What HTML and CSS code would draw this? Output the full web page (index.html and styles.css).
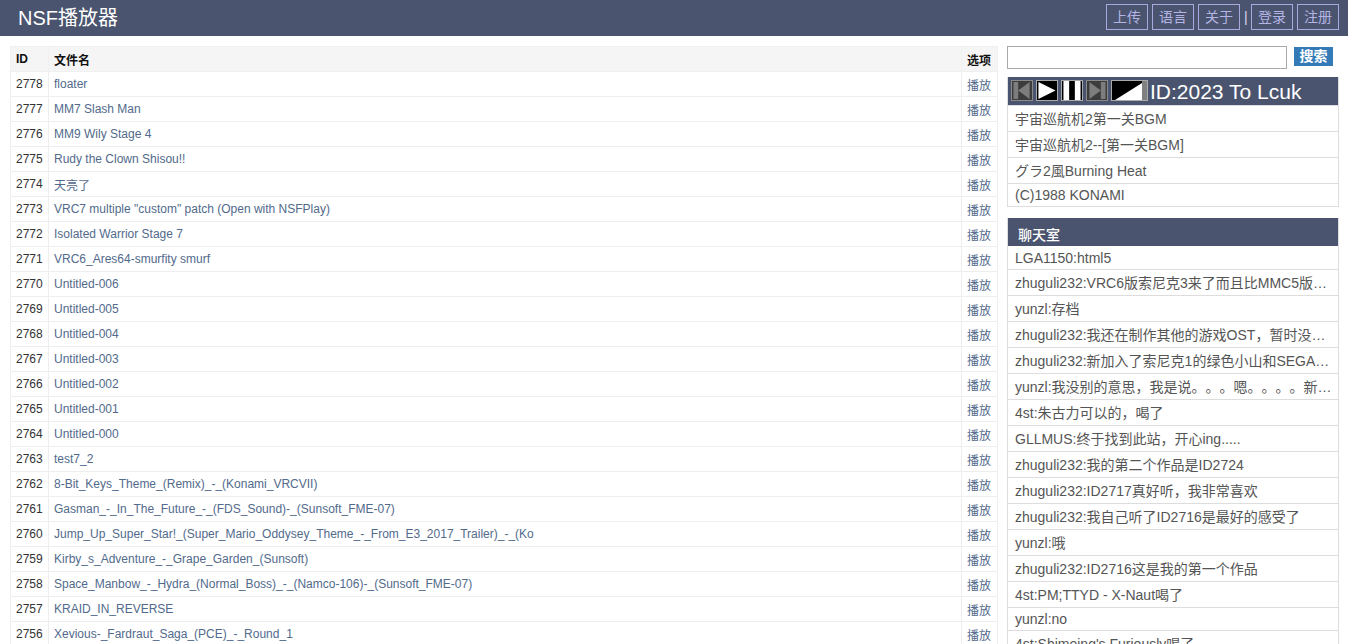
FILE: index.html
```html
<!DOCTYPE html>
<html lang="zh">
<head>
<meta charset="utf-8">
<title>NSF播放器</title>
<link rel="stylesheet" href="styles.css">
</head>
<body>
<header class="topbar">
  <h1 class="brand">NSF播放器</h1>
  <nav class="topnav">
    <a class="navbtn">上传</a>
    <a class="navbtn">语言</a>
    <a class="navbtn">关于</a>
    <span class="navsep">|</span>
    <a class="navbtn">登录</a>
    <a class="navbtn">注册</a>
  </nav>
</header>
<main class="layout">
  <section class="listcol">
    <table class="songs">
      <thead>
        <tr><th class="c-id">ID</th><th class="c-name">文件名</th><th class="c-opt">选项</th></tr>
      </thead>
      <tbody>
        <tr><td>2778</td><td><a>floater</a></td><td><a>播放</a></td></tr>
        <tr><td>2777</td><td><a>MM7 Slash Man</a></td><td><a>播放</a></td></tr>
        <tr><td>2776</td><td><a>MM9 Wily Stage 4</a></td><td><a>播放</a></td></tr>
        <tr><td>2775</td><td><a>Rudy the Clown Shisou!!</a></td><td><a>播放</a></td></tr>
        <tr><td>2774</td><td><a>天亮了</a></td><td><a>播放</a></td></tr>
        <tr><td>2773</td><td><a>VRC7 multiple "custom" patch (Open with NSFPlay)</a></td><td><a>播放</a></td></tr>
        <tr><td>2772</td><td><a>Isolated Warrior Stage 7</a></td><td><a>播放</a></td></tr>
        <tr><td>2771</td><td><a>VRC6_Ares64-smurfity smurf</a></td><td><a>播放</a></td></tr>
        <tr><td>2770</td><td><a>Untitled-006</a></td><td><a>播放</a></td></tr>
        <tr><td>2769</td><td><a>Untitled-005</a></td><td><a>播放</a></td></tr>
        <tr><td>2768</td><td><a>Untitled-004</a></td><td><a>播放</a></td></tr>
        <tr><td>2767</td><td><a>Untitled-003</a></td><td><a>播放</a></td></tr>
        <tr><td>2766</td><td><a>Untitled-002</a></td><td><a>播放</a></td></tr>
        <tr><td>2765</td><td><a>Untitled-001</a></td><td><a>播放</a></td></tr>
        <tr><td>2764</td><td><a>Untitled-000</a></td><td><a>播放</a></td></tr>
        <tr><td>2763</td><td><a>test7_2</a></td><td><a>播放</a></td></tr>
        <tr><td>2762</td><td><a>8-Bit_Keys_Theme_(Remix)_-_(Konami_VRCVII)</a></td><td><a>播放</a></td></tr>
        <tr><td>2761</td><td><a>Gasman_-_In_The_Future_-_(FDS_Sound)-_(Sunsoft_FME-07)</a></td><td><a>播放</a></td></tr>
        <tr><td>2760</td><td><a>Jump_Up_Super_Star!_(Super_Mario_Oddysey_Theme_-_From_E3_2017_Trailer)_-_(Ko</a></td><td><a>播放</a></td></tr>
        <tr><td>2759</td><td><a>Kirby_s_Adventure_-_Grape_Garden_(Sunsoft)</a></td><td><a>播放</a></td></tr>
        <tr><td>2758</td><td><a>Space_Manbow_-_Hydra_(Normal_Boss)_-_(Namco-106)-_(Sunsoft_FME-07)</a></td><td><a>播放</a></td></tr>
        <tr><td>2757</td><td><a>KRAID_IN_REVERSE</a></td><td><a>播放</a></td></tr>
        <tr><td>2756</td><td><a>Xevious-_Fardraut_Saga_(PCE)_-_Round_1</a></td><td><a>播放</a></td></tr>
      </tbody>
    </table>
  </section>
  <aside class="sidecol">
    <form class="search">
      <input class="search-input" type="text">
      <button class="search-btn" type="button">搜索</button>
    </form>
    <section class="panel player">
      <div class="panel-head player-head">
        <span class="ctrl ctrl-off"><svg viewBox="0 0 20 20"><path d="M1 1h5v18H1zM18 1v18L6 10z"/></svg></span>
        <span class="ctrl ctrl-on"><svg viewBox="0 0 20 20"><path d="M1 1l18 9L1 19z"/></svg></span>
        <span class="ctrl ctrl-on"><svg viewBox="0 0 20 20"><path d="M1 0h6v20H1zM13 0h6v20h-6z"/></svg></span>
        <span class="ctrl ctrl-off"><svg viewBox="0 0 20 20"><path d="M14 1h5v18h-5zM2 1v18l12-9z"/></svg></span>
        <span class="ctrl ctrl-vol"><svg viewBox="0 0 35 20" preserveAspectRatio="none"><path class="vol-on" d="M3 20L30 2v18z"/><path class="vol-off" d="M30 0h5v20h-5z"/></svg></span>
        <span class="player-title">ID:2023 To Lcuk</span>
      </div>
      <div class="row">宇宙巡航机2第一关BGM</div>
      <div class="row">宇宙巡航机2--[第一关BGM]</div>
      <div class="row">グラ2風Burning Heat</div>
      <div class="row row-latin">(C)1988 KONAMI</div>
    </section>
    <section class="panel chat">
      <h2 class="panel-head chat-head">聊天室</h2>
      <div class="row row-first">LGA1150:html5</div>
      <div class="row">zhuguli232:VRC6版索尼克3来了而且比MMC5版的更好听，大家快来听一听吧</div>
      <div class="row">yunzl:存档</div>
      <div class="row">zhuguli232:我还在制作其他的游戏OST，暂时没有时间上传新的作品</div>
      <div class="row">zhuguli232:新加入了索尼克1的绿色小山和SEGA的开场音乐</div>
      <div class="row">yunzl:我没别的意思，我是说。。。嗯。。。。新人加油吧，继续努力</div>
      <div class="row">4st:朱古力可以的，喝了</div>
      <div class="row">GLLMUS:终于找到此站，开心ing.....</div>
      <div class="row">zhuguli232:我的第二个作品是ID2724</div>
      <div class="row">zhuguli232:ID2717真好听，我非常喜欢</div>
      <div class="row">zhuguli232:我自己听了ID2716是最好的感受了</div>
      <div class="row">yunzl:哦</div>
      <div class="row">zhuguli232:ID2716这是我的第一个作品</div>
      <div class="row">4st:PM;TTYD - X-Naut喝了</div>
      <div class="row row-latin">yunzl:no</div>
      <div class="row">4st:Shimeing's Furiously喝了</div>
    </section>
  </aside>
</main>
</body>
</html>
```
FILE: styles.css
```css
* { box-sizing: border-box; }
html, body { margin: 0; height: 644px; overflow: hidden; }
body {
  background: #fff;
  color: #333;
  font-family: "Liberation Sans", "Noto Sans CJK SC", sans-serif;
  font-size: 14px;
  text-spacing-trim: space-all;
}
.topbar {
  display: flex;
  justify-content: space-between;
  align-items: center;
  height: 36px;
  padding: 0 9px 0 18px;
  background: #4a546e;
}
.brand { margin: 0; color: #fff; font-size: 20px; font-weight: 400; line-height: 36px; }
.topnav { display: flex; align-items: center; gap: 4px; padding-bottom: 2px; }
.navbtn {
  display: block;
  width: 42px;
  height: 26px;
  border: 1px solid #a9a9e0;
  color: #b4b4e6;
  font-size: 14px;
  line-height: 24px;
  text-align: center;
}
.navsep { width: 3px; color: #d8d8ee; font-size: 14px; }
.layout { display: flex; align-items: flex-start; gap: 9px; padding: 10px 9px 0 10px; }
.listcol { width: 988px; flex: none; }
.songs { width: 988px; border-collapse: collapse; table-layout: fixed; font-size: 12px; }
.songs th {
  height: 25px;
  padding: 0 5px;
  background: #f5f5f5;
  color: #111;
  text-align: left;
  font-weight: 700;
  border: 1px solid #f0f0f0;
}
.songs td {
  height: 25px;
  padding: 0 5px;
  color: #333;
  border: 1px solid #eee;
  white-space: nowrap;
  overflow: hidden;
}
.songs a { color: #526a8c; }
.c-id { width: 38px; }
.c-opt { width: 36px; }
.sidecol { width: 332px; flex: none; }
.search { display: flex; align-items: flex-start; height: 24px; margin: 0 0 7px; }
.search-input { width: 280px; height: 23px; padding: 0 4px; border: 1px solid #aaa; background: #fff; }
.search-btn {
  width: 39px;
  height: 19px;
  margin: 1px 0 0 7px;
  padding: 0;
  border: 0;
  background: #337ab7;
  color: #fff;
  font: 700 14px/19px "Liberation Sans", "Noto Sans CJK SC", sans-serif;
}
.panel { border: 1px solid #ddd; border-top: 0; }
.player { margin-bottom: 11px; }
.panel-head { margin: 0; background: #4a546e; color: #fff; }
.player-head {
  display: flex;
  align-items: flex-start;
  gap: 3px;
  height: 28px;
  padding: 3px 2px 0 3px;
}
.ctrl {
  display: block;
  flex: none;
  width: 22px;
  height: 21px;
  border: 1px solid #aaa;
  background: #000;
}
.ctrl svg { display: block; width: 100%; height: 100%; fill: #fff; }
.ctrl-off { background: #3c3c3c; border-color: #8a8a8a; }
.ctrl-off svg { fill: #7d7d7d; }
.ctrl-vol { width: 37px; }
.vol-off { fill: #808080; }
.player-title { margin: -1px 0 0 -1px; font-size: 21px; line-height: 26px; white-space: nowrap; }
.row {
  height: 26px;
  padding: 1px 6px 0 7px;
  border-top: 1px solid #ddd;
  color: #555;
  line-height: 24px;
  white-space: nowrap;
  overflow: hidden;
  text-overflow: ellipsis;
}
.row-first { border-top: 0; height: 23px; padding-top: 0; line-height: 25px; }
.row-latin { height: 23px; padding-top: 0; line-height: 22px; }
.chat-head {
  height: 28px;
  padding: 7px 10px 0;
  font-size: 14px;
  font-weight: 500;
  line-height: 20px;
}
```
